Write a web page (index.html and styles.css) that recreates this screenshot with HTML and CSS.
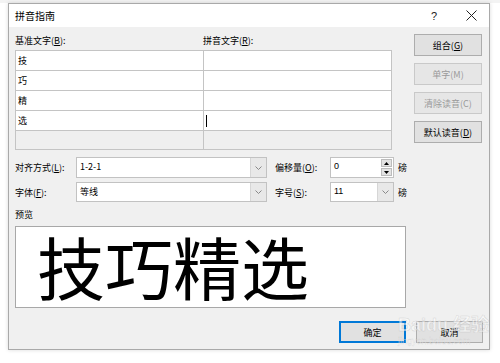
FILE: index.html
```html
<html>

<head>
	<title>拼音指南</title>
	<link rel="stylesheet" href="styles.css">
</head>

<body>
	<div class="ribbon"></div>
	<div class="dialog">
		<div class="titlebar">
			<span class="title">拼音指南</span>
			<span class="help">?</span>
			<svg class="close" width="11" height="11" viewBox="0 0 11 11"><path d="M0.5 0.5 L10.5 10.5 M10.5 0.5 L0.5 10.5" stroke="#222" stroke-width="1" fill="none"/></svg>
		</div>

		<div class="content">
			<div class="main">
				<div class="words">
					<div class="heads">
						<span class="head">基准文字(<u>B</u>):</span>
						<span class="head">拼音文字(<u>R</u>):</span>
					</div>
					<table class="grid">
						<tr><td>技</td><td></td></tr>
						<tr><td>巧</td><td></td></tr>
						<tr><td>精</td><td></td></tr>
						<tr><td>选</td><td><span class="caret"></span></td></tr>
						<tr class="empty"><td></td><td></td></tr>
					</table>
				</div>
				<div class="side">
					<button class="btn">组合(<u>G</u>)</button>
					<button class="btn" disabled>单字(M)</button>
					<button class="btn" disabled>清除读音(C)</button>
					<button class="btn">默认读音(<u>D</u>)</button>
				</div>
			</div>

			<div class="options">
				<div class="optrow tall">
					<span class="lbl">对齐方式(<u>L</u>):</span>
					<div class="combo"><span class="val">1-2-1</span><span class="drop"><svg width="7" height="4" viewBox="0 0 7 4"><path d="M0.5 0.5 L3.5 3.5 L6.5 0.5" stroke="#888" fill="none"/></svg></span></div>
					<span class="lbl2">偏移量(<u>O</u>):</span>
					<div class="spin"><span class="val">0</span><span class="arrows"><span class="arr"><svg width="5" height="3" viewBox="0 0 5 3"><path d="M0 3 L2.5 0 L5 3 Z" fill="#000"/></svg></span><span class="arr"><svg width="5" height="3" viewBox="0 0 5 3"><path d="M0 0 L2.5 3 L5 0 Z" fill="#000"/></svg></span></span></div>
					<span class="unit">磅</span>
				</div>
				<div class="optrow">
					<span class="lbl">字体(<u>F</u>):</span>
					<div class="combo"><span class="val">等线</span><span class="drop"><svg width="7" height="4" viewBox="0 0 7 4"><path d="M0.5 0.5 L3.5 3.5 L6.5 0.5" stroke="#888" fill="none"/></svg></span></div>
					<span class="lbl2">字号(<u>S</u>):</span>
					<div class="spin"><span class="val">11</span><span class="drop"><svg width="7" height="4" viewBox="0 0 7 4"><path d="M0.5 0.5 L3.5 3.5 L6.5 0.5" stroke="#888" fill="none"/></svg></span></div>
					<span class="unit">磅</span>
				</div>
			</div>

			<div class="preview-label">预览</div>
			<div class="preview">技巧精选</div>

			<div class="actions">
				<button class="btn default">确定</button>
				<button class="btn">取消</button>
			</div>
		</div>
	</div>

	<div class="watermark">
		<span class="wm-big">Baidu 经验</span>
		<span class="wm-small">jingyan.baidu.com</span>
	</div>
</body>
</html>
```

FILE: styles.css
```css
body {
	margin: 0;
	background-color: #ffffff;
	font-family: "Noto Sans CJK SC", "Liberation Sans", sans-serif;
	font-size: 9px;
	color: #000000;
}

.ribbon {
	height: 3px;
	background-color: #f3f3f3;
}

.dialog {
	margin-left: 8px;
	width: 480px;
	border: 1px solid #a9a9a9;
	background-color: #f0f0f0;
	box-shadow: 0 0 4px rgba(0, 0, 0, 0.15);
}

.titlebar {
	height: 23px;
	background-color: #ffffff;
	display: flex;
	align-items: center;
	padding-left: 6px;
}

.title {
	font-size: 10px;
	flex: 1;
}

.help {
	font-family: "Liberation Sans", sans-serif;
	font-size: 11px;
	color: #222;
	margin-right: 29px;
}

.close {
	margin-right: 12px;
}

.content {
	padding: 6px;
}

.main {
	display: flex;
	gap: 23px;
}

.words {
	width: 376px;
}

.heads {
	display: flex;
	height: 17px;
	line-height: 15px;
}

.head {
	width: 189px;
}

u {
	text-decoration: underline;
	text-underline-offset: 1px;
}

.grid {
	width: 377px;
	border-collapse: collapse;
	background-color: #ffffff;
	table-layout: fixed;
}

.grid td {
	height: 19px;
	padding: 0 0 0 2px;
	border: 1px solid #c4c4c4;
	font-size: 9px;
	line-height: 19px;
	vertical-align: middle;
}

.grid tr.empty td {
	background-color: #efefef;
}

.caret {
	display: inline-block;
	width: 1px;
	height: 12px;
	background-color: #000;
	vertical-align: middle;
}

.side {
	width: 68px;
	display: flex;
	flex-direction: column;
	gap: 7px;
	padding-top: 1px;
}

.btn {
	height: 22px;
	padding: 0;
	background-color: #e1e1e1;
	border: 1px solid #adadad;
	font-family: "Noto Sans CJK SC", "Liberation Sans", sans-serif;
	font-size: 9px;
	color: #000;
}

.btn:disabled {
	background-color: #e6e6e6;
	border-color: #c9c9c9;
	color: #9a9a9a;
}

.options {
	margin-top: 7px;
	display: flex;
	flex-direction: column;
	gap: 4px;
}

.optrow {
	display: flex;
	align-items: center;
	height: 20px;
}

.optrow.tall {
	height: 21px;
}

.lbl {
	width: 61px;
}

.lbl2 {
	width: 55px;
	margin-left: 8px;
}

.combo, .spin {
	height: 100%;
	box-sizing: border-box;
	background-color: #ffffff;
	border: 1px solid #c2c2c2;
	display: flex;
	align-items: stretch;
}

.combo {
	width: 191px;
}

.spin {
	width: 64px;
}

.val {
	flex: 1;
	padding-left: 3px;
	line-height: 17px;
	font-family: "Liberation Sans", "Noto Sans CJK SC", sans-serif;
}

.combo .val {
	font-family: "Noto Sans CJK SC", sans-serif;
}

.drop {
	width: 15px;
	background-color: #e8e8e8;
	border-left: 1px solid #d6d6d6;
	display: flex;
	align-items: center;
	justify-content: center;
}

.arrows {
	width: 11px;
	display: flex;
	flex-direction: column;
	gap: 1px;
	padding: 1px 1px 1px 0;
}

.arr {
	flex: 1;
	background-color: #e3e3e3;
	border: 1px solid #bcbcbc;
	display: flex;
	align-items: center;
	justify-content: center;
}

.arr svg {
	display: block;
}

.unit {
	margin-left: 4px;
}

.preview-label {
	height: 16px;
	margin-top: 6px;
	line-height: 14px;
}

.preview {
	box-sizing: border-box;
	width: 391px;
	height: 82px;
	margin-top: 2px;
	padding: 5px 0 0 21px;
	border: 1px solid #a8a8a8;
	background-color: #ffffff;
	font-size: 68px;
	line-height: 68px;
	white-space: nowrap;
}

.actions {
	margin-top: 13px;
	display: flex;
	justify-content: flex-end;
	gap: 10px;
}

.actions .btn {
	width: 67px;
}

.btn.default {
	border-color: #0078d7;
	box-shadow: inset 0 0 0 1px #0078d7;
}

.watermark {
	position: absolute;
	left: 398px;
	top: 314px;
	display: flex;
	flex-direction: column;
	align-items: flex-start;
	white-space: nowrap;
	color: rgba(255, 255, 255, 0.55);
	pointer-events: none;
}

.wm-big {
	font-family: "Liberation Sans", "Noto Sans CJK SC", sans-serif;
	font-size: 18px;
	line-height: 22px;
	font-weight: bold;
	-webkit-text-stroke: 0.5px rgba(150, 150, 150, 0.35);
}

.wm-small {
	font-family: "Liberation Sans", sans-serif;
	font-size: 9px;
	line-height: 11px;
	-webkit-text-stroke: 0.3px rgba(150, 150, 150, 0.35);
}
```
